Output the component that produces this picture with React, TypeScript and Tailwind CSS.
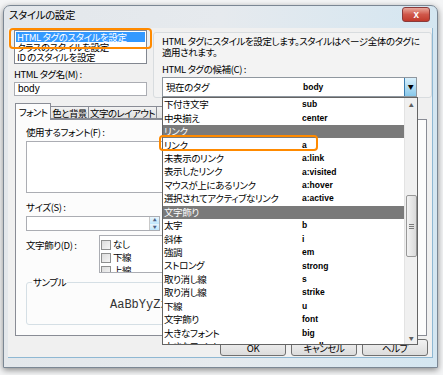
import React from 'react';

const jp = "font-['Noto_Sans_CJK_JP','Noto_Sans',sans-serif] [font-feature-settings:'palt'] text-[9.5px] tracking-[-0.4px]";

type Row = { name: string; tag?: string; group?: boolean };

const rows: Row[] = [
  { name: '下付き文字', tag: 'sub' },
  { name: '中央揃え', tag: 'center' },
  { name: 'リンク', group: true },
  { name: 'リンク', tag: 'a' },
  { name: '未表示のリンク', tag: 'a:link' },
  { name: '表示したリンク', tag: 'a:visited' },
  { name: 'マウスが上にあるリンク', tag: 'a:hover' },
  { name: '選択されてアクティブなリンク', tag: 'a:active' },
  { name: '文字飾り', group: true },
  { name: '太字', tag: 'b' },
  { name: '斜体', tag: 'i' },
  { name: '強調', tag: 'em' },
  { name: 'ストロング', tag: 'strong' },
  { name: '取り消し線', tag: 's' },
  { name: '取り消し線', tag: 'strike' },
  { name: '下線', tag: 'u' },
  { name: '文字飾り', tag: 'font' },
  { name: '大きなフォント', tag: 'big' },
  { name: '小さなフォント', tag: 'small' },
];

const Checkbox = ({ label }: { label: string }) => (
  <div className="flex items-center h-[13px] gap-[2px]">
    <span className="w-[10px] h-[10px] border border-[#8e8f8f] bg-gradient-to-br from-[#dcdcdc] to-[#f6f6f6]" />
    <span className="leading-[13px]">{label}</span>
  </div>
);

const Button = ({ label }: { label: string }) => (
  <div className="w-[66px] h-[17px] border border-[#707070] rounded-[3px] bg-gradient-to-b from-[#f2f2f2] to-[#dcdcdc] flex items-center justify-center leading-[12px]">
    {label}
  </div>
);

export default function App() {
  return (
    <div className={`w-[443px] h-[375px] bg-[#f4f5f6] pt-[5px] pl-[3px] overflow-hidden relative text-black ${jp}`}>
      {/* window */}
      <div className="w-[435px] h-[363px] rounded-t-[7px] border border-[#7b8794] bg-gradient-to-r from-[#e3e7eb] via-[#e6eaee] to-[#d4e6f1] flex flex-col shadow-[0_2px_6px_rgba(0,0,0,0.45)]">
        <div className="h-[22px] flex items-start">
          <span className="pl-[5px] pt-[3px] text-[10.5px] leading-[12px]">スタイルの設定</span>
          <div className="ml-auto mr-[7px] mt-[1px] w-[28px] h-[15px] rounded-[3px] border border-[#8a3b3b] bg-gradient-to-b from-[#e8a79c] via-[#d0574a] to-[#c0392b] flex items-center justify-center">
            <span className="text-white text-[10px] leading-[10px] font-bold font-['Liberation_Sans',sans-serif]">x</span>
          </div>
        </div>

        {/* client area */}
        <div className="ml-[4px] w-[425px] h-[330px] bg-[#f0f0f0] border-r border-b border-[#8fb8d3] flex flex-col">
          <div className="pt-[2px] flex">
            {/* left column */}
            <div className="ml-[6px] w-[133px] flex flex-col">
              <div className="h-[34px] border border-[#828790] bg-white p-[1px] leading-[10px]">
                <div className="h-[10px] bg-[#3399ff] text-white pl-[1px]">HTML タグのスタイルを設定</div>
                <div className="h-[10px] pl-[1px]">クラスのスタイルを設定</div>
                <div className="h-[10px] pl-[1px]">ID のスタイルを設定</div>
              </div>
              <div className="mt-[4px] leading-[12px]">HTML タグ名(M) :</div>
              <div className="mt-[2px] h-[14px] border border-[#abadb3] bg-white pl-[3px] text-[10px] tracking-normal leading-[12px] font-['Liberation_Sans',sans-serif]">
                body
              </div>
            </div>

            {/* right column */}
            <div className="ml-[6px] mt-[2px] w-[279px] h-[66px] border border-[#d8dcdf] rounded-[3px] bg-[#f3f3f3] pl-[8px] pt-[3px]">
              <div className="leading-[11px]">
                HTML タグにスタイルを設定します。スタイルはページ全体のタグに
                <br />
                適用されます。
              </div>
              <div className="mt-[5px] leading-[12px]">HTML タグの候補(C) :</div>
              <div className="mt-[2px] w-[255px] h-[20px] border border-[#8f979f] bg-white flex items-center">
                <span className="pl-[3px] w-[140px]">現在のタグ</span>
                <span className="text-[8.5px] tracking-normal font-bold font-['Liberation_Sans',sans-serif]">body</span>
                <div className="ml-auto w-[12px] h-full border-l border-[#3c7fb1] bg-gradient-to-b from-[#d9f0fc] to-[#88c8ea] flex items-center justify-center">
                  <span className="text-[6px] leading-[6px]">▼</span>
                </div>
              </div>
            </div>
          </div>

          {/* tabs */}
          <div className="mt-[5px] ml-[7px] h-[16px] flex items-end tracking-[-0.6px]">
            <div className="relative z-10 -mb-[1px] w-[36px] h-[17px] border border-b-0 border-[#898c95] bg-[#fcfcfc] flex items-center justify-center leading-[12px]">
              フォント
            </div>
            <div className="w-[38px] h-[13px] border border-l-0 border-[#898c95] bg-gradient-to-b from-[#f2f2f2] to-[#e1e1e1] flex items-center justify-center leading-[12px]">
              色と背景
            </div>
            <div className="w-[68px] h-[13px] border border-l-0 border-[#898c95] bg-gradient-to-b from-[#f2f2f2] to-[#e1e1e1] flex items-center justify-center leading-[12px]">
              文字のレイアウト
            </div>
            <div className="w-[40px] h-[13px] border border-l-0 border-[#898c95] bg-gradient-to-b from-[#f2f2f2] to-[#e1e1e1]" />
          </div>

          {/* tab panel */}
          <div className="ml-[7px] w-[412px] h-[217px] border border-[#898c95] bg-[#fcfcfc] pl-[10px] pt-[6px] flex flex-col">
            <div className="leading-[12px]">使用するフォント(F) :</div>
            <div className="mt-[3px] w-[390px] h-[52px] border border-[#abadb3] bg-white" />
            <div className="mt-[8px] leading-[12px]">サイズ(S) :</div>
            <div className="mt-[3px] w-[134px] h-[15px] border border-[#abadb3] bg-white flex justify-end">
              <div className="w-[10px] h-full flex flex-col border-l border-[#c9c9c9]">
                <div className="flex-1 bg-gradient-to-b from-[#eaf6fd] to-[#bee6fd] flex items-center justify-center text-[4px] leading-[4px] text-[#4d6185]">▲</div>
                <div className="flex-1 bg-gradient-to-b from-[#eaf6fd] to-[#bee6fd] flex items-center justify-center text-[4px] leading-[4px] text-[#4d6185]">▼</div>
              </div>
            </div>
            <div className="mt-[4px] flex">
              <div className="w-[73px] pt-[4px] leading-[12px]">文字飾り(D) :</div>
              <div className="w-[66px] h-[38px] border border-[#abadb3] bg-white pl-[1px] pt-[2px] overflow-hidden">
                <Checkbox label="なし" />
                <Checkbox label="下線" />
                <Checkbox label="上線" />
              </div>
            </div>
            <div className="relative mt-[9px] w-[390px] h-[43px] border border-[#d5dfe5] rounded-[3px] pl-[83px] pt-[14px]">
              <span className="absolute -top-[7px] left-[5px] px-[1px] bg-[#fcfcfc] leading-[12px]">サンプル</span>
              <span className="text-[12px] tracking-normal leading-[14px] font-['Liberation_Mono',monospace] text-[#333]">AaBbYyZz</span>
            </div>
          </div>

          {/* buttons */}
          <div className="mt-[3px] pr-[4px] flex justify-end gap-[5px]">
            <Button label="OK" />
            <Button label="キャンセル" />
            <Button label="ヘルプ" />
          </div>
        </div>
      </div>

      {/* open drop-down list */}
      <div className="absolute left-[162px] top-[97px] w-[256px] h-[248px] border border-[#646464] bg-white flex overflow-hidden">
        <div className="flex-1 flex flex-col">
          {rows.map((r, i) =>
            r.group ? (
              <div key={i} className="shrink-0 h-[13.45px] leading-[13.45px] bg-[#7a7a7a] text-white pl-[1px]">
                {r.name}
              </div>
            ) : (
              <div key={i} className="shrink-0 h-[13.45px] flex items-center">
                <span className="w-[139px] pl-[1px] leading-[13px]">{r.name}</span>
                <span className="text-[8.5px] tracking-normal font-bold font-['Liberation_Sans',sans-serif]">{r.tag}</span>
              </div>
            )
          )}
        </div>
        <div className="w-[13px] h-full bg-[#f0f0f0] border-l border-[#e3e3e3] flex flex-col items-center">
          <div className="h-[13px] flex items-center justify-center text-[5px] leading-[5px] text-[#606060]">▲</div>
          <div className="mt-[84px] w-[11px] h-[62px] border border-[#989898] rounded-[2px] bg-gradient-to-r from-[#f3f3f3] to-[#dadada] flex flex-col items-center justify-center gap-[1px]">
            <span className="w-[5px] h-[1px] bg-[#7a7a7a]" />
            <span className="w-[5px] h-[1px] bg-[#7a7a7a]" />
            <span className="w-[5px] h-[1px] bg-[#7a7a7a]" />
          </div>
          <div className="mt-auto h-[13px] flex items-center justify-center text-[5px] leading-[5px] text-[#606060]">▼</div>
        </div>
      </div>

      {/* orange callouts */}
      <div className="absolute left-[9px] top-[28px] w-[143px] h-[21px] border-2 border-[#ff8a00] rounded-[4px]" />
      <div className="absolute left-[159px] top-[135px] w-[159px] h-[16px] border-2 border-[#ff8a00] rounded-[4px]" />
    </div>
  );
}
